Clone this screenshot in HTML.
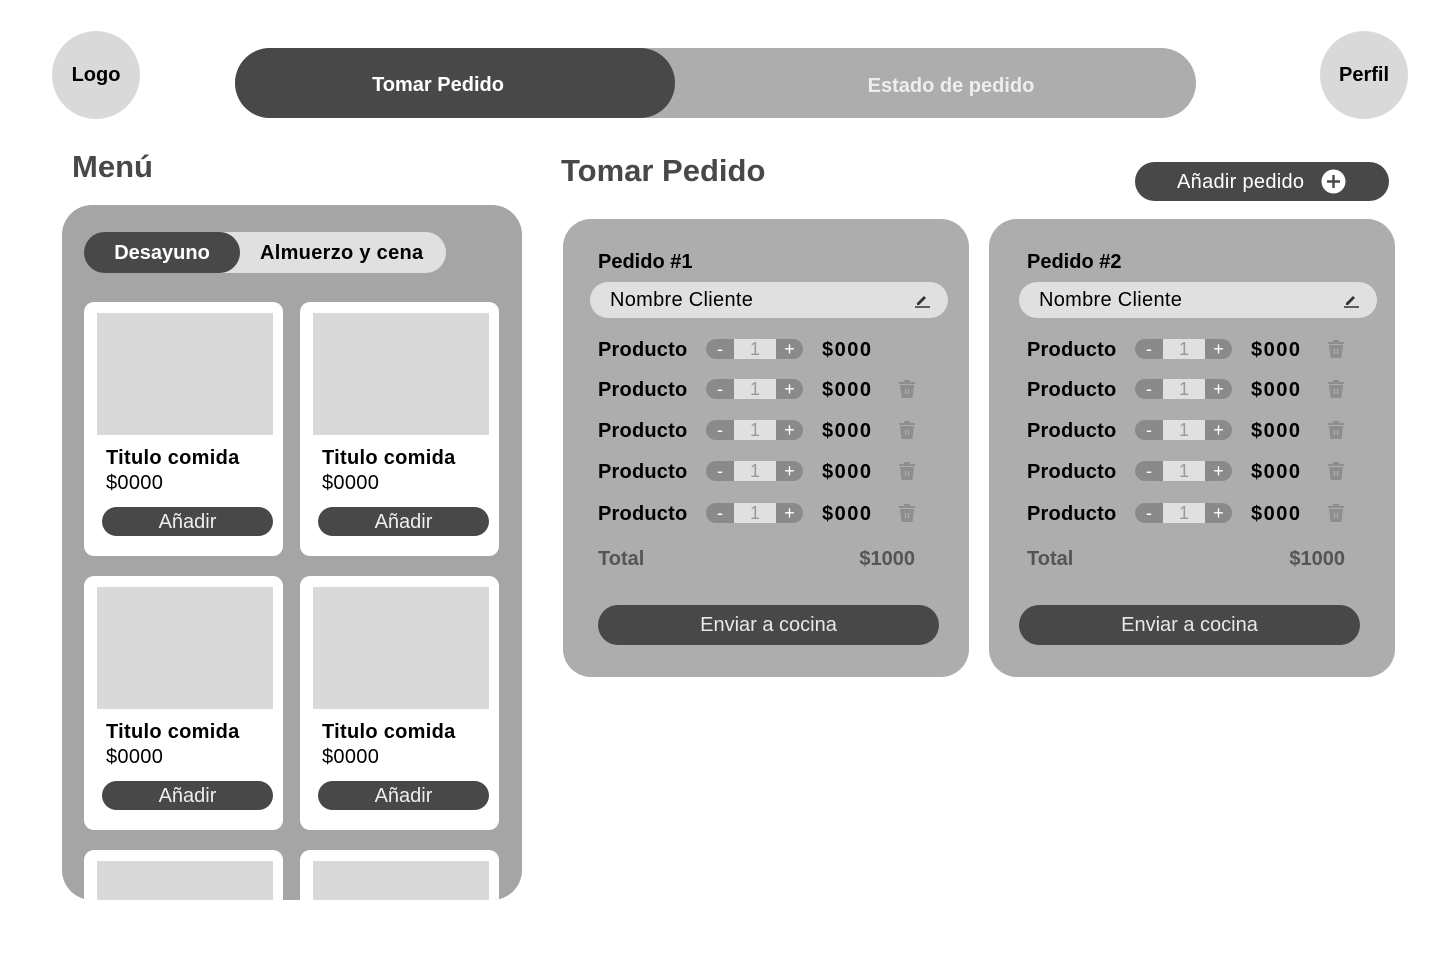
<!DOCTYPE html>
<html><head><meta charset="utf-8"><style>
*{margin:0;padding:0;box-sizing:border-box}
html,body{width:1440px;height:960px;overflow:hidden}
body{background:#fff;position:relative;font-family:"Liberation Sans",Arial,sans-serif;color:#000}
.a{position:absolute}
.circ{width:88px;height:88px;border-radius:50%;background:#d9d9d9;display:flex;align-items:center;justify-content:center;font-weight:bold;font-size:20px}
.card{position:absolute;width:199px;height:254px;background:#fff;border-radius:10px}
.card .img{position:absolute;left:13px;top:11px;width:176px;height:122px;background:#d9d9d9}
.card .t{position:absolute;left:22px;top:145px;font-weight:bold;font-size:20px;letter-spacing:0.3px}
.card .p{position:absolute;left:22px;top:170px;font-size:20px;letter-spacing:0.3px}
.card .b{position:absolute;left:18px;top:205px;width:171px;height:29px;border-radius:15px;background:#484848;color:#eee;font-size:20px;text-align:center;line-height:31px}
.oc{position:absolute;top:219px;width:406px;height:458px;background:#adadad;border-radius:28px}
.oc .h{position:absolute;left:35px;top:32px;font-weight:bold;font-size:20px}
.oc .nm{position:absolute;left:27px;top:63px;width:358px;height:36px;border-radius:18px;background:#e0e0e0;font-size:20px;padding-left:20px;line-height:37px;letter-spacing:0.3px}
.oc .nm svg{position:absolute;right:18px;top:10px}
.row{position:absolute;left:35px;height:24px;width:330px}
.row .pr{position:absolute;left:0;top:1px;font-weight:bold;font-size:20px;line-height:24px;letter-spacing:0.2px}
.st{position:absolute;left:108px;top:2px;width:97px;height:20px;border-radius:10px;overflow:hidden;background:#8a8a8a;display:flex}
.st span{display:block;height:20px;line-height:20px;text-align:center;color:#fff;font-size:18px}
.st .m{width:28px}.st .n{width:42px;background:#e0e0e0;color:#999;font-size:18px}.st .pl{width:27px}
.row .pc{position:absolute;left:224px;top:1px;font-weight:bold;font-size:20px;line-height:24px;letter-spacing:1.5px}
.row svg{position:absolute;left:300px;top:2px}
.tot{position:absolute;top:329px;font-weight:bold;font-size:20px;color:#555}
.send{position:absolute;left:35px;top:386px;width:341px;height:40px;border-radius:20px;background:#484848;color:#e8e8e8;font-size:20px;text-align:center;line-height:41px}
.oc2 .h,.oc2 .row{left:38px}
.oc2 .nm{left:30px}
</style></head><body>
<div class="a circ" style="left:52px;top:31px">Logo</div>
<div class="a circ" style="left:1320px;top:31px">Perfil</div>
<div class="a" style="left:235px;top:48px;width:961px;height:70px;border-radius:35px;background:#adadad"></div>
<div class="a" style="left:235px;top:48px;width:440px;height:70px;border-radius:35px;background:#484848"></div>
<div class="a" style="left:235px;top:50px;width:406px;height:70px;color:#fff;font-weight:bold;font-size:20px;text-align:center;line-height:70px">Tomar Pedido</div>
<div class="a" style="left:675px;top:50px;width:552px;height:72px;color:#eee;font-weight:bold;font-size:20px;text-align:center;line-height:72px">Estado de pedido</div>

<div class="a" style="left:72px;top:149px;font-weight:bold;font-size:31px;color:#484848">Menú</div>
<div class="a" style="left:561px;top:153px;font-weight:bold;font-size:31px;color:#484848">Tomar Pedido</div>
<div class="a" style="left:1135px;top:162px;width:254px;height:39px;border-radius:20px;background:#484848;color:#fff;font-size:20px;line-height:40px;padding-left:42px;letter-spacing:0.3px">Añadir pedido
<svg class="a" style="left:186px;top:7px" width="25" height="25" viewBox="0 0 25 25"><circle cx="12.5" cy="12.5" r="12" fill="#fff"/><path d="M12.5 6v13M6 12.5h13" stroke="#484848" stroke-width="2.4"/></svg></div>

<div class="a" style="left:62px;top:205px;width:460px;height:695px;border-radius:30px;background:#a5a5a5;overflow:hidden">
<div class="a" style="left:22px;top:27px;width:362px;height:41px;border-radius:21px;background:#e0e0e0"></div>
<div class="a" style="left:22px;top:27px;width:156px;height:41px;border-radius:21px;background:#484848;color:#fff;font-weight:bold;font-size:20px;text-align:center;line-height:43px">Desayuno</div>
<div class="a" style="left:198px;top:28px;font-weight:bold;font-size:20px;line-height:41px;letter-spacing:0.3px">Almuerzo y cena</div>
<div class="card" style="left:22px;top:97px"><div class="img"></div><div class="t">Titulo comida</div><div class="p">$0000</div><div class="b">Añadir</div></div>
<div class="card" style="left:238px;top:97px"><div class="img"></div><div class="t">Titulo comida</div><div class="p">$0000</div><div class="b">Añadir</div></div>
<div class="card" style="left:22px;top:371px"><div class="img"></div><div class="t">Titulo comida</div><div class="p">$0000</div><div class="b">Añadir</div></div>
<div class="card" style="left:238px;top:371px"><div class="img"></div><div class="t">Titulo comida</div><div class="p">$0000</div><div class="b">Añadir</div></div>
<div class="card" style="left:22px;top:645px"><div class="img"></div></div>
<div class="card" style="left:238px;top:645px"><div class="img"></div></div>
</div>

<div class="oc" style="left:563px">
<div class="h">Pedido #1</div>
<div class="nm">Nombre Cliente<svg width="16" height="16" viewBox="0 0 16 16"><path d="M3 11l7-7 2 2-7 7H3z" fill="#333"/><path d="M1 15h15" stroke="#333" stroke-width="1.5"/></svg></div>
<div class="row" style="top:118px"><div class="pr">Producto</div><div class="st"><span class="m">-</span><span class="n">1</span><span class="pl">+</span></div><div class="pc">$000</div></div>
<div class="row" style="top:158px"><div class="pr">Producto</div><div class="st"><span class="m">-</span><span class="n">1</span><span class="pl">+</span></div><div class="pc">$000</div><svg width="18" height="20" viewBox="0 0 18 20"><path d="M6 1h6v2h5v2H1V3h5z" fill="#8e8e8e"/><path d="M2 6h14l-1.5 13h-11z" fill="#8e8e8e"/><path d="M7.5 10v5M10.5 10v5" stroke="#adadad" stroke-width="1.3"/></svg></div>
<div class="row" style="top:199px"><div class="pr">Producto</div><div class="st"><span class="m">-</span><span class="n">1</span><span class="pl">+</span></div><div class="pc">$000</div><svg width="18" height="20" viewBox="0 0 18 20"><path d="M6 1h6v2h5v2H1V3h5z" fill="#8e8e8e"/><path d="M2 6h14l-1.5 13h-11z" fill="#8e8e8e"/><path d="M7.5 10v5M10.5 10v5" stroke="#adadad" stroke-width="1.3"/></svg></div>
<div class="row" style="top:240px"><div class="pr">Producto</div><div class="st"><span class="m">-</span><span class="n">1</span><span class="pl">+</span></div><div class="pc">$000</div><svg width="18" height="20" viewBox="0 0 18 20"><path d="M6 1h6v2h5v2H1V3h5z" fill="#8e8e8e"/><path d="M2 6h14l-1.5 13h-11z" fill="#8e8e8e"/><path d="M7.5 10v5M10.5 10v5" stroke="#adadad" stroke-width="1.3"/></svg></div>
<div class="row" style="top:282px"><div class="pr">Producto</div><div class="st"><span class="m">-</span><span class="n">1</span><span class="pl">+</span></div><div class="pc">$000</div><svg width="18" height="20" viewBox="0 0 18 20"><path d="M6 1h6v2h5v2H1V3h5z" fill="#8e8e8e"/><path d="M2 6h14l-1.5 13h-11z" fill="#8e8e8e"/><path d="M7.5 10v5M10.5 10v5" stroke="#adadad" stroke-width="1.3"/></svg></div>
<div class="tot" style="left:35px">Total</div><div class="tot" style="right:54px">$1000</div>
<div class="send">Enviar a cocina</div>
</div>

<div class="oc oc2" style="left:989px">
<div class="h">Pedido #2</div>
<div class="nm">Nombre Cliente<svg width="16" height="16" viewBox="0 0 16 16"><path d="M3 11l7-7 2 2-7 7H3z" fill="#333"/><path d="M1 15h15" stroke="#333" stroke-width="1.5"/></svg></div>
<div class="row" style="top:118px"><div class="pr">Producto</div><div class="st"><span class="m">-</span><span class="n">1</span><span class="pl">+</span></div><div class="pc">$000</div><svg width="18" height="20" viewBox="0 0 18 20"><path d="M6 1h6v2h5v2H1V3h5z" fill="#8e8e8e"/><path d="M2 6h14l-1.5 13h-11z" fill="#8e8e8e"/><path d="M7.5 10v5M10.5 10v5" stroke="#adadad" stroke-width="1.3"/></svg></div>
<div class="row" style="top:158px"><div class="pr">Producto</div><div class="st"><span class="m">-</span><span class="n">1</span><span class="pl">+</span></div><div class="pc">$000</div><svg width="18" height="20" viewBox="0 0 18 20"><path d="M6 1h6v2h5v2H1V3h5z" fill="#8e8e8e"/><path d="M2 6h14l-1.5 13h-11z" fill="#8e8e8e"/><path d="M7.5 10v5M10.5 10v5" stroke="#adadad" stroke-width="1.3"/></svg></div>
<div class="row" style="top:199px"><div class="pr">Producto</div><div class="st"><span class="m">-</span><span class="n">1</span><span class="pl">+</span></div><div class="pc">$000</div><svg width="18" height="20" viewBox="0 0 18 20"><path d="M6 1h6v2h5v2H1V3h5z" fill="#8e8e8e"/><path d="M2 6h14l-1.5 13h-11z" fill="#8e8e8e"/><path d="M7.5 10v5M10.5 10v5" stroke="#adadad" stroke-width="1.3"/></svg></div>
<div class="row" style="top:240px"><div class="pr">Producto</div><div class="st"><span class="m">-</span><span class="n">1</span><span class="pl">+</span></div><div class="pc">$000</div><svg width="18" height="20" viewBox="0 0 18 20"><path d="M6 1h6v2h5v2H1V3h5z" fill="#8e8e8e"/><path d="M2 6h14l-1.5 13h-11z" fill="#8e8e8e"/><path d="M7.5 10v5M10.5 10v5" stroke="#adadad" stroke-width="1.3"/></svg></div>
<div class="row" style="top:282px"><div class="pr">Producto</div><div class="st"><span class="m">-</span><span class="n">1</span><span class="pl">+</span></div><div class="pc">$000</div><svg width="18" height="20" viewBox="0 0 18 20"><path d="M6 1h6v2h5v2H1V3h5z" fill="#8e8e8e"/><path d="M2 6h14l-1.5 13h-11z" fill="#8e8e8e"/><path d="M7.5 10v5M10.5 10v5" stroke="#adadad" stroke-width="1.3"/></svg></div>
<div class="tot" style="left:38px">Total</div><div class="tot" style="right:50px">$1000</div>
<div class="send" style="left:30px">Enviar a cocina</div>
</div>
</body></html>
